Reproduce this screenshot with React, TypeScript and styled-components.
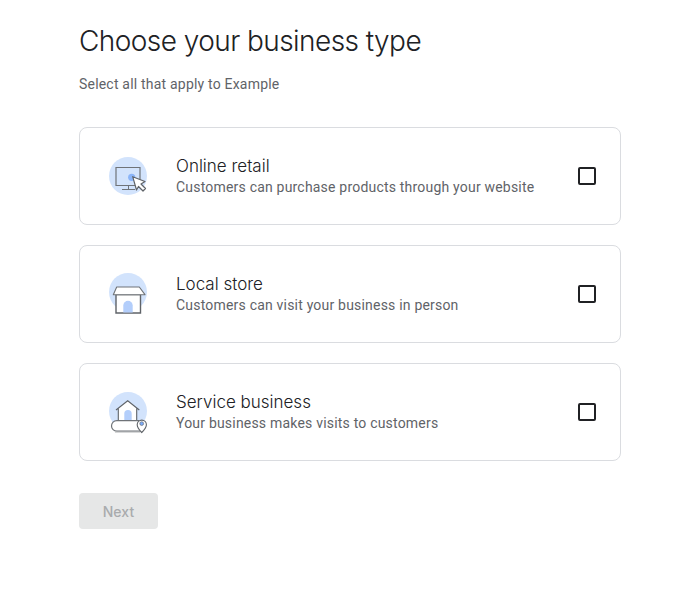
import { ReactElement, ReactNode } from 'react'
import styled, { createGlobalStyle } from 'styled-components'

const GlobalStyle = createGlobalStyle`
    html, body {
        margin: 0;
        padding: 0;
        background: #fff;
    }
`

const Page = styled.main`
    width: 542px;
    padding: 21px 0 0 79px;
    font-family: Roboto, 'Liberation Sans', sans-serif;
`

const Title = styled.h1`
    margin: 0;
    font-family: Inter, sans-serif;
    font-size: 28px;
    line-height: 40px;
    font-weight: 300;
    letter-spacing: -0.56px;
    color: #202124;
`

const Subtitle = styled.p`
    margin: 13px 0 0;
    font-size: 14px;
    line-height: 20px;
    letter-spacing: 0.2px;
    color: #5f6368;
`

const CardList = styled.div`
    display: flex;
    flex-direction: column;
    gap: 20px;
    margin-top: 33px;
`

const Card = styled.label`
    box-sizing: border-box;
    display: flex;
    align-items: center;
    height: 98px;
    padding: 0 24px;
    border: 1px solid #dadce0;
    border-radius: 8px;
    cursor: pointer;
`

const IconSlot = styled.span`
    display: block;
    flex: none;
    width: 48px;
    height: 48px;
    margin-right: 24px;
`

const CardText = styled.span`
    display: flex;
    flex: 1;
    flex-direction: column;
`

const CardTitle = styled.span`
    font-family: Inter, sans-serif;
    font-size: 17px;
    font-weight: 300;
    line-height: 22px;
    letter-spacing: 0;
    color: #202124;
`

const CardBody = styled.span`
    font-size: 14px;
    line-height: 20px;
    letter-spacing: 0.2px;
    color: #5f6368;
`

const CheckBox = styled.span`
    box-sizing: border-box;
    flex: none;
    width: 18px;
    height: 18px;
    border: 2px solid #202124;
    border-radius: 2px;
`

const NextButton = styled.button`
    display: block;
    width: 79px;
    height: 36px;
    margin-top: 32px;
    padding: 0;
    border: none;
    border-radius: 4px;
    background: #e6e7e7;
    color: #a9abad;
    font-family: Inter, sans-serif;
    font-size: 14px;
    font-weight: 500;
    letter-spacing: 0.1px;
`

const IconSvg = styled.svg`
    display: block;
`

function RetailIcon(): ReactElement {
    return (
        <IconSvg width='48' height='48' viewBox='0 0 48 48' fill='none'>
            <circle cx='24' cy='24' r='19' fill='#d2e3fc' />
            <path d='M12 15.500h24v18H12z' stroke='#6f7378' strokeWidth='1.2' />
            <path d='M24.500 33.500v4M18 37.500h13' stroke='#6f7378' strokeWidth='1' />
            <circle cx='27.700' cy='25.300' r='3.600' fill='#8ab4f8' />
            <path
                d='M28.700 24.700 41 29.500l-4 2.500 4.500 4.500-2.500 2.500-4.500-4.500-2 3.500z'
                fill='#fff'
                stroke='#5f6368'
                strokeWidth='1.2'
                strokeLinejoin='round'
            />
        </IconSvg>
    )
}

function StoreIcon(): ReactElement {
    return (
        <IconSvg width='48' height='48' viewBox='0 0 48 48' fill='none'>
            <circle cx='24' cy='22' r='19' fill='#d2e3fc' />
            <path d='M12 24.500v18.500h24.500V24.500z' fill='#fff' stroke='#5f6368' strokeWidth='1.4' />
            <path d='M12.700 17h22.600l5.700 7.700H9.300z' fill='#fff' stroke='#6f7378' strokeWidth='1.1' strokeLinejoin='round' />
            <path d='M19.300 42.500v-7a4.700 4.700 0 0 1 9.400 0v7z' fill='#b3cefb' />
        </IconSvg>
    )
}

function ServiceIcon(): ReactElement {
    return (
        <IconSvg width='48' height='48' viewBox='0 0 48 48' fill='none'>
            <circle cx='24' cy='23' r='19' fill='#d2e3fc' />
            <path d='M14.300 20v12.700h18.400V20L23.700 12.700z' fill='#fff' />
            <path
                d='M14.300 32.700V19.800M32.700 32.700V19.800M12 22l11.700-9.300L35.300 22'
                stroke='#5f6368'
                strokeWidth='1.1'
            />
            <path d='M20.300 32.700V25.700a3.700 3.700 0 0 1 7.400 0v7z' fill='#b3cefb' />
            <path
                d='M35 32.600H12.800a5.300 5.300 0 0 0 0 10.600H36'
                fill='#fff'
                stroke='#6f7378'
                strokeWidth='1.2'
            />
            <path d='M11 44h25' stroke='#b0b2b4' strokeWidth='1' />
            <path
                d='M37.700 44.500c-2.800-3-4.500-5.200-4.500-7.800a4.600 4.600 0 0 1 9.200 0c0 2.600-1.700 4.800-4.700 7.800z'
                fill='#fff'
                stroke='#5f6368'
                strokeWidth='1.1'
            />
            <circle cx='37.700' cy='35.600' r='1.900' fill='#7baaf7' stroke='#5f6368' strokeWidth='.6' />
        </IconSvg>
    )
}

interface BusinessOption {
    title: string
    body: string
    icon: ReactNode
}

const options: BusinessOption[] = [
    {
        title: 'Online retail',
        body: 'Customers can purchase products through your website',
        icon: <RetailIcon />,
    },
    {
        title: 'Local store',
        body: 'Customers can visit your business in person',
        icon: <StoreIcon />,
    },
    {
        title: 'Service business',
        body: 'Your business makes visits to customers',
        icon: <ServiceIcon />,
    },
]

export default function App(): ReactElement {
    return (
        <Page>
            <GlobalStyle />
            <Title>Choose your business type</Title>
            <Subtitle>Select all that apply to Example</Subtitle>
            <CardList>
                {options.map((option) => (
                    <Card key={option.title}>
                        <IconSlot>{option.icon}</IconSlot>
                        <CardText>
                            <CardTitle>{option.title}</CardTitle>
                            <CardBody>{option.body}</CardBody>
                        </CardText>
                        <CheckBox />
                    </Card>
                ))}
            </CardList>
            <NextButton disabled>Next</NextButton>
        </Page>
    )
}
